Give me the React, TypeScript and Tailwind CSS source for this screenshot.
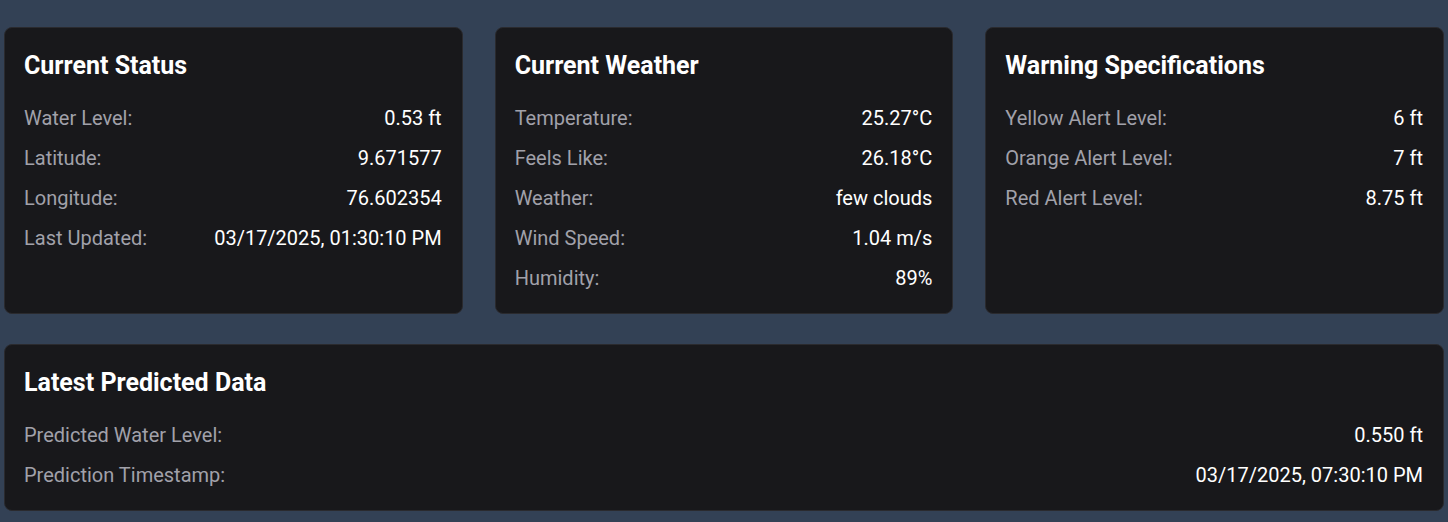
import React from "react";

type Row = [string, string];

function Card({ title, rows }: { title: string; rows: Row[] }) {
  return (
    <div className="rounded-lg bg-[#18181b] border border-[#2a2a2e] pl-[19px] pr-[20px] pt-[22px] pb-[21px]">
      <h2 className="text-[25px] leading-[32px] font-bold text-white">{title}</h2>
      <div className="mt-[22px] flex flex-col gap-3">
        {rows.map(([k, v]) => (
          <div key={k} className="flex justify-between text-[20px] leading-[28px]">
            <span className="text-[#a1a1aa]">{k}</span>
            <span className="text-white">{v}</span>
          </div>
        ))}
      </div>
    </div>
  );
}

export default function App() {
  return (
    <div
      className="min-h-screen bg-[#334155] px-1 pt-[27px] pb-4"
      style={{ fontFamily: "Roboto, 'Noto Sans', sans-serif" }}
    >
      <div className="grid grid-cols-3 gap-8">
        <Card
          title="Current Status"
          rows={[
            ["Water Level:", "0.53 ft"],
            ["Latitude:", "9.671577"],
            ["Longitude:", "76.602354"],
            ["Last Updated:", "03/17/2025, 01:30:10 PM"],
          ]}
        />
        <Card
          title="Current Weather"
          rows={[
            ["Temperature:", "25.27°C"],
            ["Feels Like:", "26.18°C"],
            ["Weather:", "few clouds"],
            ["Wind Speed:", "1.04 m/s"],
            ["Humidity:", "89%"],
          ]}
        />
        <Card
          title="Warning Specifications"
          rows={[
            ["Yellow Alert Level:", "6 ft"],
            ["Orange Alert Level:", "7 ft"],
            ["Red Alert Level:", "8.75 ft"],
          ]}
        />
      </div>
      <div className="mt-[30px]">
        <Card
          title="Latest Predicted Data"
          rows={[
            ["Predicted Water Level:", "0.550 ft"],
            ["Prediction Timestamp:", "03/17/2025, 07:30:10 PM"],
          ]}
        />
      </div>
    </div>
  );
}
